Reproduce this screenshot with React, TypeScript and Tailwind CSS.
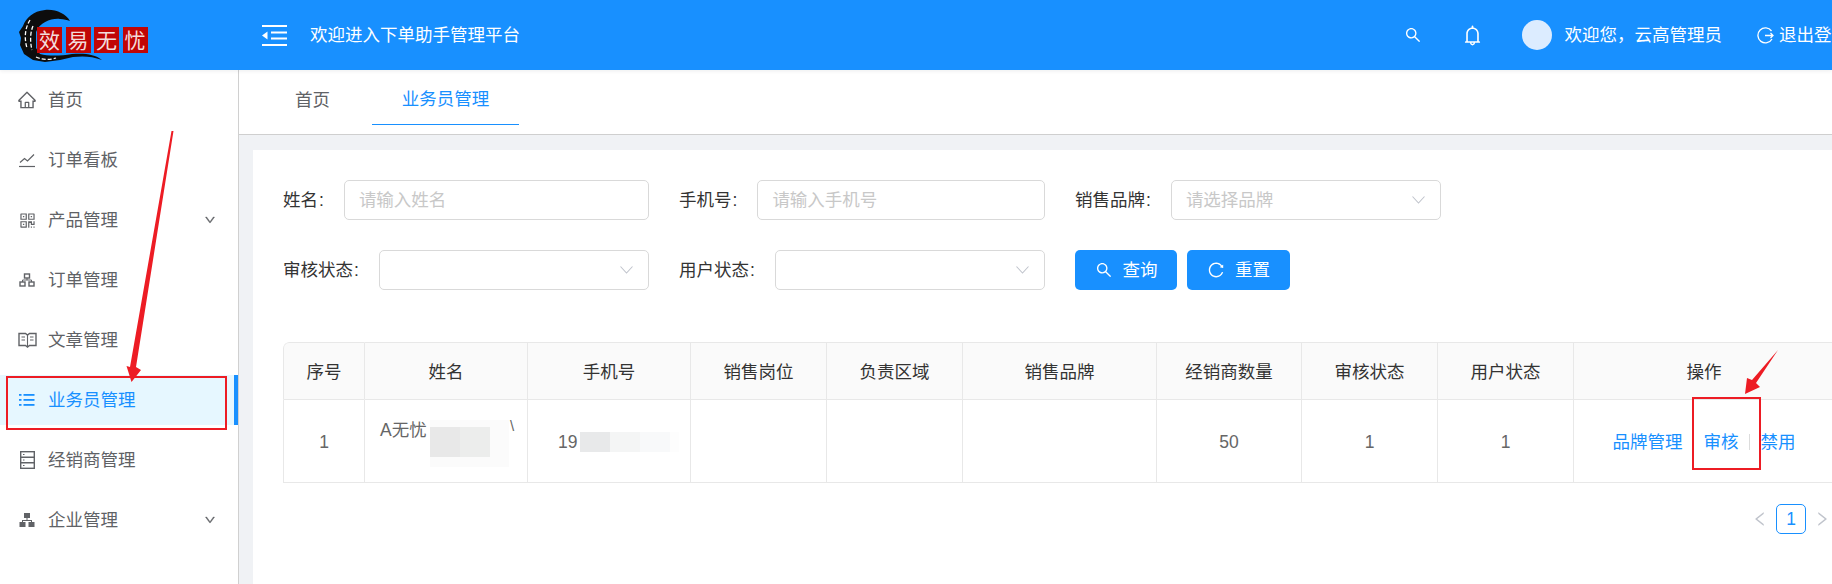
import React from 'react'
import {
  AiOutlineHome,
  AiOutlineQrcode,
  AiOutlineDown,
  AiOutlineSearch,
  AiOutlineBell,
  AiOutlineReload,
  AiOutlineLeft,
  AiOutlineRight,
} from 'react-icons/ai'

const StockIcon = () => (
  <svg width="18" height="18" viewBox="0 0 18 18" fill="none" stroke="currentColor" strokeWidth="1.2">
    <path d="M1 15.5h16" />
    <path d="M2 11.5l4.5-4 3 2.5L16 3.5" />
  </svg>
)

const OrgOutline = () => (
  <svg width="16" height="16" viewBox="0 0 16 16" fill="none" stroke="currentColor" strokeWidth="1.4">
    <rect x="5.500" y="2" width="5" height="4" />
    <rect x="1" y="10" width="5" height="4" />
    <rect x="10" y="10" width="5" height="4" />
    <path d="M8 6v2M3.500 10V8h9v2" strokeWidth="1" />
  </svg>
)

const OrgFilled = () => (
  <svg width="18" height="18" viewBox="0 0 18 18" fill="currentColor">
    <rect x="6" y="2" width="6" height="5" />
    <rect x="1.500" y="11" width="6" height="5" />
    <rect x="10.500" y="11" width="6" height="5" />
    <path d="M8.500 7h1v2H14v2h-1v-1H5v1H4V9h4.500z" />
  </svg>
)

const BookIcon = () => (
  <svg width="19" height="16" viewBox="0 0 19 16" fill="none" stroke="currentColor" strokeWidth="1.4">
    <path d="M1 1.500h6.500L9.500 3l2-1.500H18v12h-6.500l-2 1.500-2-1.500H1z" />
    <path d="M9.500 3v11M3.500 5h3.500M3.500 8h3.500M12 5h3.500M12 8h3.500" strokeWidth="1.1" />
  </svg>
)

const ListIcon = () => (
  <svg width="16" height="14" viewBox="0 0 16 14" fill="currentColor">
    <rect x="0" y="1" width="2.500" height="1.800" />
    <rect x="4.500" y="1" width="11" height="1.800" />
    <rect x="0" y="6" width="2.500" height="1.800" />
    <rect x="4.500" y="6" width="11" height="1.800" />
    <rect x="0" y="11" width="2.500" height="1.800" />
    <rect x="4.500" y="11" width="11" height="1.800" />
  </svg>
)

const ServerIcon = () => (
  <svg width="15" height="18" viewBox="0 0 15 18" fill="none" stroke="currentColor" strokeWidth="1.4">
    <rect x=".7" y=".7" width="13.600" height="16.600" />
    <path d="M.7 6.200h13.600M.7 11.800h13.600" />
    <path d="M3 3.500h1.500M3 9h1.500M3 14.500h1.500" strokeWidth="1" />
  </svg>
)

const menus = [
  { label: '首页', icon: <AiOutlineHome size={20} /> },
  { label: '订单看板', icon: <StockIcon /> },
  { label: '产品管理', icon: <AiOutlineQrcode size={19} />, arrow: true },
  { label: '订单管理', icon: <OrgOutline /> },
  { label: '文章管理', icon: <BookIcon /> },
  { label: '业务员管理', icon: <ListIcon />, active: true },
  { label: '经销商管理', icon: <ServerIcon /> },
  { label: '企业管理', icon: <OrgFilled />, arrow: true },
]

const columns = [
  { title: '序号', width: 82 },
  { title: '姓名', width: 163 },
  { title: '手机号', width: 163 },
  { title: '销售岗位', width: 136 },
  { title: '负责区域', width: 136 },
  { title: '销售品牌', width: 194 },
  { title: '经销商数量', width: 145 },
  { title: '审核状态', width: 136 },
  { title: '用户状态', width: 136 },
  { title: '操作', width: 261 },
]

const Logo = () => (
  <div className="relative h-[70px] w-[238px] shrink-0">
    <svg className="absolute left-0 top-0" width="120" height="70" viewBox="0 0 120 70">
      <path
        d="M70 21C66 14 56 9 45 10C33 11 26 18 23 26L19 32L21 38L20 45L24 54L33 60L45 62L60 60L73 57C82 56 92 56 102 60C95 54 84 53 72 54C60 56 48 56 40 54L36 48V32C40 22 52 18 60 19C64 19 67 20 70 21Z"
        fill="#0d0d0d"
      />
      <path d="M30 20C25 28 24 38 27 48M33 26C30 33 30 42 32 50M36 57C42 60 50 60 56 58" stroke="#fff" strokeWidth="1.300" fill="none" strokeDasharray="4 2" />
    </svg>
    <div className="absolute left-[37px] top-[27px] flex gap-[3.500px]">
      {['效', '易', '无', '忧'].map((c) => (
        <span key={c} className="flex h-[26px] w-[25px] items-center justify-center bg-[#c00606] text-[21px] font-normal leading-none text-[#f3dcdc]">
          {c}
        </span>
      ))}
    </div>
  </div>
)

const Header = () => (
  <header className="relative z-10 flex h-[70px] shrink-0 items-center bg-[#1890ff] text-white shadow-[0_1px_4px_rgba(0,21,41,0.08)]">
    <Logo />
    <svg className="ml-[24px]" width="25" height="21" viewBox="0 0 25 21" fill="white">
      <rect x="0" y="0" width="25" height="2" />
      <rect x="9" y="6.500" width="16" height="2" />
      <rect x="9" y="12.500" width="16" height="2" />
      <rect x="0" y="19" width="25" height="2" />
      <path d="M5.500 6.500v8L0 10.500z" />
    </svg>
    <span className="ml-[23px]">欢迎进入下单助手管理平台</span>
    <div className="ml-auto -mr-[17px] flex shrink-0 items-center">
      <AiOutlineSearch size={18} />
      <AiOutlineBell size={23} className="ml-[39px]" />
      <span className="ml-[38px] h-[30px] w-[30px] rounded-full bg-[#dcecff]" />
      <span className="ml-[13px]">欢迎您，云高管理员</span>
      <svg className="ml-[35px]" width="17" height="17" viewBox="0 0 17 17" fill="none" stroke="white" strokeWidth="1.300">
        <path d="M14.500 4A7.500 7.500 0 1 0 15 12" />
        <path d="M8 8.500h8M13.500 6l2.500 2.500-2.500 2.500" />
      </svg>
      <span className="ml-[5px]">退出登录</span>
    </div>
  </header>
)

const Sidebar = () => (
  <aside className="w-[239px] shrink-0 border-r border-[#d0d0d0] bg-white py-[5px]">
    {menus.map((m) => (
      <div
        key={m.label}
        className={
          m.active
            ? 'mb-[10px] flex h-[50px] items-center border-r-[4px] border-[#1890ff] bg-[#e6f7ff] text-[#1890ff]'
            : 'mb-[10px] flex h-[50px] items-center text-[#606266]'
        }
      >
        <span className="flex w-[48px] justify-center pl-[6px]">{m.icon}</span>
        <span className="pt-[1px]">{m.label}</span>
        {m.arrow && <AiOutlineDown size={12} className="ml-auto mr-[22px] stroke-[40]" />}
      </div>
    ))}
  </aside>
)

const Field = ({ label, children }: { label: string; children: React.ReactNode }) => (
  <div className="flex w-[366px] items-center text-[#333]">
    <span className="shrink-0">{label}</span>
    <span className="ml-[1px] mr-[20px] shrink-0">:</span>
    {children}
  </div>
)

const TextInput = ({ placeholder }: { placeholder: string }) => (
  <div className="flex h-[40px] flex-1 items-center rounded-[5px] border border-[#d9d9d9] px-[14px] text-[#c8c8c8]">{placeholder}</div>
)

const SelectInput = ({ placeholder }: { placeholder?: string }) => (
  <div className="flex h-[40px] flex-1 items-center justify-between rounded-[5px] border border-[#d9d9d9] pl-[14px] pr-[15px] text-[#c8c8c8]">
    <span>{placeholder}</span>
    <svg width="13" height="8" viewBox="0 0 13 8" fill="none" stroke="#c0c4cc" strokeWidth="1.100">
      <path d="M.5.500l6 6.500 6-6.500" />
    </svg>
  </div>
)

const Filters = () => (
  <div className="flex w-[1158px] flex-wrap gap-x-[30px] gap-y-[30px]">
    <Field label="姓名">
      <TextInput placeholder="请输入姓名" />
    </Field>
    <Field label="手机号">
      <TextInput placeholder="请输入手机号" />
    </Field>
    <Field label="销售品牌">
      <SelectInput placeholder="请选择品牌" />
    </Field>
    <Field label="审核状态">
      <SelectInput />
    </Field>
    <Field label="用户状态">
      <SelectInput />
    </Field>
    <div className="flex gap-[10px] text-white">
      <button className="flex h-[40px] w-[102px] items-center justify-center gap-[10px] rounded-[5px] bg-[#1890ff]">
        <AiOutlineSearch size={18} />
        查询
      </button>
      <button className="flex h-[40px] w-[103px] items-center justify-center gap-[10px] rounded-[5px] bg-[#1890ff]">
        <AiOutlineReload size={18} />
        重置
      </button>
    </div>
  </div>
)

const cellLine = 'border border-[#e8e8e8] text-center'

const UserTable = () => (
  <table className="mt-[52px] w-[1552px] table-fixed border-separate border-spacing-0 overflow-hidden rounded-tl-[6px]">
    <colgroup>
      {columns.map((c) => (
        <col key={c.title} style={{ width: c.width }} />
      ))}
    </colgroup>
    <thead>
      <tr className="h-[58px] bg-[#fafafa] text-[#333]">
        {columns.map((c, i) => (
          <th key={c.title} className={`${i ? 'border-l-0' : 'rounded-tl-[6px]'} ${cellLine} pt-[3px] font-normal`}>
            {c.title}
          </th>
        ))}
      </tr>
    </thead>
    <tbody>
      <tr className="h-[83px] text-[#666]">
        <td className={`${cellLine} border-t-0 pt-[2px]`}>1</td>
        <td className={`relative border-l-0 border-t-0 ${cellLine}`}>
          <span className="absolute left-[15px] top-[17px]">A无忧</span>
          {/* mosaic over the name */}
          <div className="absolute left-[65px] top-[20px] h-[47px] w-[79px] bg-[#fbfbfb]" />
          <div className="absolute left-[65px] top-[27px] h-[30px] w-[30px] bg-[#e8e8e8]" />
          <div className="absolute left-[95px] top-[27px] h-[30px] w-[30px] bg-[#ecedec]" />
          <span className="absolute left-[145px] top-[15px] text-[15px]">\</span>
        </td>
        <td className={`relative border-l-0 border-t-0 ${cellLine} pt-[2px]`}>
          <div className="flex items-center pl-[30px]">
            <span className="w-[22px] text-left">19</span>
            <span className="h-[20px] w-[30px] bg-[#e8e9ea]" />
            <span className="h-[20px] w-[30px] bg-[#f4f5f5]" />
            <span className="h-[20px] w-[30px] bg-[#f8f9fa]" />
            <span className="h-[20px] w-[9px] bg-[#fdfdfd]" />
          </div>
        </td>
        <td className={`border-l-0 border-t-0 ${cellLine}`} />
        <td className={`border-l-0 border-t-0 ${cellLine}`} />
        <td className={`border-l-0 border-t-0 ${cellLine}`} />
        <td className={`border-l-0 border-t-0 ${cellLine} pt-[2px]`}>50</td>
        <td className={`border-l-0 border-t-0 ${cellLine} pt-[2px]`}>1</td>
        <td className={`border-l-0 border-t-0 ${cellLine} pt-[2px]`}>1</td>
        <td className={`border-l-0 border-t-0 ${cellLine} pt-[2px]`}>
          <div className="flex items-center justify-center text-[#1890ff]">
            <span>品牌管理</span>
            <span className="ml-[9px] mr-[11px] h-[16px] w-px bg-[#dcdcdc]" />
            <span>审核</span>
            <span className="ml-[10px] mr-[11px] h-[16px] w-px bg-[#dcdcdc]" />
            <span>禁用</span>
          </div>
        </td>
      </tr>
    </tbody>
  </table>
)

const Pagination = () => (
  <div className="mt-[21px] flex w-[1552px] items-center justify-end pr-[4px]">
    <AiOutlineLeft size={18} className="text-[#c0c4cc]" />
    <span className="ml-[7px] flex h-[30px] w-[30px] items-center justify-center rounded-[5px] border border-[#1890ff] text-[#1890ff]">1</span>
    <AiOutlineRight size={18} className="ml-[7px] text-[#c0c4cc]" />
  </div>
)

// red marks drawn on top of the screenshot
const Annotations = () => (
  <>
    <div className="absolute left-[6px] top-[376px] h-[54px] w-[221px] border-2 border-[#ed1c24]" />
    <div className="absolute left-[1692px] top-[397px] h-[73px] w-[69px] border-2 border-[#ed1c24]" />
    <svg className="pointer-events-none absolute left-0 top-0" width="1832" height="584" fill="#ed1c24">
      <path d="M171.500 131h2L136 367l5 3-9.500 12-5-16 3.500 1z" />
      <path d="M1778 350l-22 33 4 4-15 7 2-16 5 2z" />
    </svg>
  </>
)

export default function App() {
  return (
    <div className="relative flex h-screen w-full flex-col overflow-hidden bg-white font-['Liberation_Sans','Noto_Sans_CJK_SC',sans-serif] text-[17.500px]">
      <Header />
      <div className="flex min-h-0 flex-1">
        <Sidebar />
        <main className="flex min-w-0 flex-1 flex-col bg-[#f0f2f5]">
          <nav className="flex h-[65px] shrink-0 items-start border-b border-[#cfcfcf] bg-white pl-[26px]">
            <div className="flex h-[55px] w-[95px] items-center justify-center pt-[5px] text-[#606266]">首页</div>
            <div className="ml-[12px] flex h-[55px] w-[147px] items-center justify-center border-b border-[#1890ff] pt-[5px] text-[#1890ff]">业务员管理</div>
          </nav>
          <section className="ml-[14px] mt-[15px] flex-1 bg-white pl-[30px] pt-[30px]">
            <Filters />
            <UserTable />
            <Pagination />
          </section>
        </main>
      </div>
      <Annotations />
    </div>
  )
}
